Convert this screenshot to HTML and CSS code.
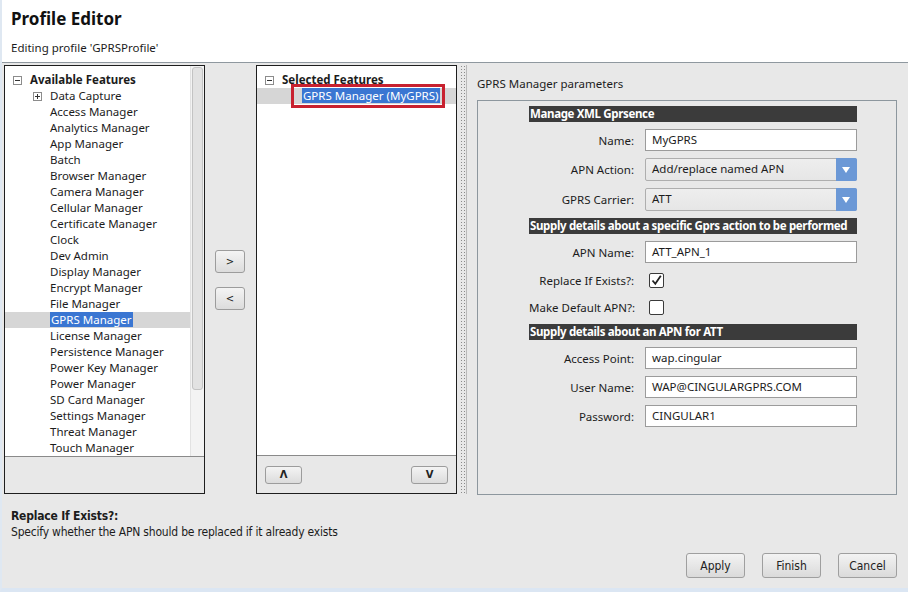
FILE: index.html
```html
<!DOCTYPE html>
<html lang="en">
<head>
    <meta charset="UTF-8">
    <title>Profile Editor</title>
    <link rel="stylesheet" href="styles.css">
</head>
<body>
<div class="window">
    <header class="head">
        <h1>Profile Editor</h1>
        <p>Editing profile 'GPRSProfile'</p>
    </header>

    <div class="main">
        <!-- available features -->
        <div class="panel first">
            <div class="list-area">
                <div class="tree">
                    <div class="row root"><span class="exp minus"></span><b>Available Features</b></div>
                    <div class="row child has-exp"><span class="exp plus"></span>Data Capture</div>
                    <div class="row child">Access Manager</div>
                    <div class="row child">Analytics Manager</div>
                    <div class="row child">App Manager</div>
                    <div class="row child">Batch</div>
                    <div class="row child">Browser Manager</div>
                    <div class="row child">Camera Manager</div>
                    <div class="row child">Cellular Manager</div>
                    <div class="row child">Certificate Manager</div>
                    <div class="row child">Clock</div>
                    <div class="row child">Dev Admin</div>
                    <div class="row child">Display Manager</div>
                    <div class="row child">Encrypt Manager</div>
                    <div class="row child">File Manager</div>
                    <div class="row child sel"><span class="hl">GPRS Manager</span></div>
                    <div class="row child">License Manager</div>
                    <div class="row child">Persistence Manager</div>
                    <div class="row child">Power Key Manager</div>
                    <div class="row child">Power Manager</div>
                    <div class="row child">SD Card Manager</div>
                    <div class="row child">Settings Manager</div>
                    <div class="row child">Threat Manager</div>
                    <div class="row child">Touch Manager</div>
                </div>
                <div class="scrollbar"><div class="thumb"></div></div>
            </div>
            <div class="panel-foot"></div>
        </div>

        <div class="move-col">
            <button class="small-btn">&gt;</button>
            <button class="small-btn">&lt;</button>
        </div>

        <!-- selected features -->
        <div class="panel">
            <div class="list-area">
                <div class="tree full">
                    <div class="row root"><span class="exp minus"></span><b>Selected Features</b></div>
                    <div class="row child sel"><span class="hl marked">GPRS Manager (MyGPRS)</span></div>
                </div>
            </div>
            <div class="panel-foot order">
                <button class="small-btn wide">&#x39B;</button>
                <button class="small-btn wide">V</button>
            </div>
        </div>

        <div class="splitter"></div>

        <!-- parameters -->
        <div class="params">
            <div class="params-title">GPRS Manager parameters</div>
            <div class="params-box">
                <div class="form">
                    <div class="section">Manage XML Gprsence</div>
                    <label>Name:</label>
                    <div class="field">MyGPRS</div>

                    <label>APN Action:</label>
                    <div class="field select">Add/replace named APN<span class="arrow"></span></div>

                    <label>GPRS Carrier:</label>
                    <div class="field select">ATT<span class="arrow"></span></div>

                    <div class="section">Supply details about a specific Gprs action to be performed</div>
                    <label>APN Name:</label>
                    <div class="field">ATT_APN_1</div>

                    <label class="chk-label">Replace If Exists?:</label>
                    <div class="chk-cell">
                        <span class="checkbox">
                            <svg width="13" height="13" viewBox="0 0 13 13"><path d="M2.5 6.5 L5.3 9.8 L10.8 1.8" fill="none" stroke="#222" stroke-width="1.8"/></svg>
                        </span>
                    </div>

                    <label class="chk-label">Make Default APN?:</label>
                    <div class="chk-cell"><span class="checkbox"></span></div>

                    <div class="section">Supply details about an APN for ATT</div>
                    <label>Access Point:</label>
                    <div class="field">wap.cingular</div>

                    <label>User Name:</label>
                    <div class="field">WAP@CINGULARGPRS.COM</div>

                    <label>Password:</label>
                    <div class="field">CINGULAR1</div>
                </div>
            </div>
        </div>
    </div>

    <div class="help">
        <div class="help-title">Replace If Exists?:</div>
        <div>Specify whether the APN should be replaced if it already exists</div>
    </div>

    <div class="actions">
        <button class="btn">Apply</button>
        <button class="btn">Finish</button>
        <button class="btn">Cancel</button>
    </div>
</div>
</body>
</html>
```

FILE: styles.css
```css
* {
    box-sizing: border-box;
}

body {
    margin: 0;
    font-family: "Noto Sans", "Open Sans", sans-serif;
    font-size: 11.5px;
    color: #1c1c1c;
    background: #e8e8e8;
}

.window {
    width: 908px;
    height: 592px;
    overflow: hidden;
    background: #e8e8e8;
    border-left: 2px solid #dfe8f2;
    border-bottom: 4px solid #dbe6f3;
}

/* header */
.head {
    height: 63px;
    background: #fff;
    border-bottom: 1px solid #8f989f;
    padding: 6px 0 0 9px;
}

.head h1 {
    margin: 0;
    font-size: 17px;
    line-height: 26px;
    font-weight: bold;
    color: #111;
}

.head p {
    margin: 8px 0 0 0;
    font-size: 11.5px;
    line-height: 16px;
}

/* main area */
.main {
    display: flex;
    margin-top: 2px;
    height: 430px;
}

.panel {
    width: 201px;
    height: 429px;
    border: 1px solid #1e1e1e;
    display: flex;
    flex-direction: column;
}

.panel.first {
    margin-left: 2px;
}

.list-area {
    flex: 1;
    display: flex;
    background: #fff;
    border-bottom: 1px solid #8a8a8a;
}

.tree {
    width: 185px;
    padding-top: 6px;
}

.tree.full {
    width: 100%;
}

.row {
    height: 16px;
    line-height: 16px;
    white-space: nowrap;
    position: relative;
}

.row.root {
    padding-left: 8px;
}

.row.child {
    padding-left: 45px;
}

.row.child.has-exp {
    padding-left: 28px;
}

.exp {
    display: inline-block;
    width: 9px;
    height: 9px;
    border: 1px solid #8c8c8c;
    margin-right: 8px;
    vertical-align: -1px;
    position: relative;
    background: #fff;
}

.exp::before {
    content: "";
    position: absolute;
    left: 1px;
    top: 3px;
    width: 5px;
    height: 1px;
    background: #333;
}

.exp.plus::after {
    content: "";
    position: absolute;
    left: 3px;
    top: 1px;
    width: 1px;
    height: 5px;
    background: #333;
}

.row b {
    font-weight: bold;
}

.row.sel {
    background: #d6d6d6;
}

.hl {
    background: #3a76d2;
    color: #fff;
    padding: 0 1px;
}

.hl.marked {
    position: relative;
}

/* red annotation frame around the selected item */
.hl.marked::after {
    content: "";
    position: absolute;
    left: -11px;
    right: -5px;
    top: -4px;
    bottom: -5px;
    border: 3px solid #c8212f;
}

.scrollbar {
    width: 14px;
    background: #f3f3f3;
    border-left: 1px solid #e2e2e2;
    padding: 1px 1px 0 1px;
}

.thumb {
    height: 323px;
    background: #e2e2e2;
    border: 1px solid #c3c3c3;
    border-radius: 3px;
}

.panel-foot {
    height: 37px;
    background: #e8e8e8;
}

.panel-foot.order {
    display: flex;
    justify-content: space-between;
    padding: 10px 8px 0 8px;
}

.small-btn {
    width: 30px;
    height: 23px;
    padding: 0;
    font-family: "DejaVu Sans", sans-serif;
    font-size: 10px;
    color: #222;
    background: linear-gradient(#f4f4f4, #dcdcdc);
    border: 1px solid #9c9c9c;
    border-radius: 3px;
}

.small-btn.wide {
    width: 37px;
    height: 18px;
    font-size: 10px;
    font-weight: bold;
    line-height: 14px;
}

.move-col {
    width: 51px;
    padding: 185px 0 0 10px;
    display: flex;
    flex-direction: column;
    gap: 14px;
}

.move-col .small-btn {
    margin: 0;
}

.splitter {
    width: 7px;
    height: 429px;
    margin-left: 3px;
    background-image: radial-gradient(circle, #8a8a8a 0.7px, transparent 1px);
    background-size: 3px 3px;
    background-position: 0 0;
    border-right: 1px solid #b9b9b9;
}

/* parameters */
.params {
    flex: 1;
    padding: 11px 11px 0 10px;
}

.params-title {
    height: 16px;
    line-height: 16px;
    margin-left: 0;
    margin-bottom: 8px;
}

.params-box {
    height: 395px;
    border: 1px solid #8d979e;
    padding: 5px 0 0 51px;
}

.form {
    display: grid;
    grid-template-columns: 105px 212px;
    column-gap: 11px;
    row-gap: 7px;
    align-items: center;
}

.section {
    grid-column: 1 / 3;
    height: 16px;
    line-height: 16px;
    background: #3b3b3b;
    color: #fff;
    font-weight: bold;
    padding-left: 1px;
    white-space: nowrap;
    overflow: hidden;
    letter-spacing: -0.35px;
}

.form label {
    text-align: right;
    white-space: nowrap;
}

.field {
    height: 22px;
    line-height: 20px;
    background: #fff;
    border: 1px solid #9b9b9b;
    padding-left: 6px;
    white-space: nowrap;
}

.field.select {
    height: 23px;
    background: linear-gradient(#eeeeee, #e6e6e6);
    border-color: #aeaeae;
    border-radius: 2px;
    position: relative;
}

.arrow {
    position: absolute;
    right: -1px;
    top: -1px;
    width: 21px;
    height: 23px;
    background: #6b98d6;
    border-radius: 0 2px 2px 0;
}

.arrow::after {
    content: "";
    position: absolute;
    left: 6px;
    top: 9px;
    border-left: 4px solid transparent;
    border-right: 4px solid transparent;
    border-top: 6px solid #fff;
}

.chk-cell {
    height: 20px;
    display: flex;
    align-items: center;
    padding-left: 4px;
}

.checkbox {
    width: 15px;
    height: 15px;
    border: 1px solid #3a3a3a;
    border-radius: 2px;
    background: #fff;
    display: flex;
    align-items: center;
    justify-content: center;
}

/* help text */
.help {
    padding: 13px 0 0 9px;
    font-family: "DejaVu Sans", sans-serif;
    font-stretch: condensed;
    font-size: 12px;
    line-height: 16px;
    letter-spacing: -0.2px;
}

.help-title {
    font-weight: bold;
}

.actions {
    display: flex;
    justify-content: flex-end;
    gap: 17px;
    padding: 13px 11px 0 0;
}

.btn {
    width: 59px;
    height: 25px;
    padding: 0;
    font-family: "DejaVu Sans", sans-serif;
    font-stretch: condensed;
    font-size: 12px;
    color: #222;
    background: linear-gradient(#f3f3f3, #dadada);
    border: 1px solid #9f9f9f;
    border-radius: 3px;
}
```
